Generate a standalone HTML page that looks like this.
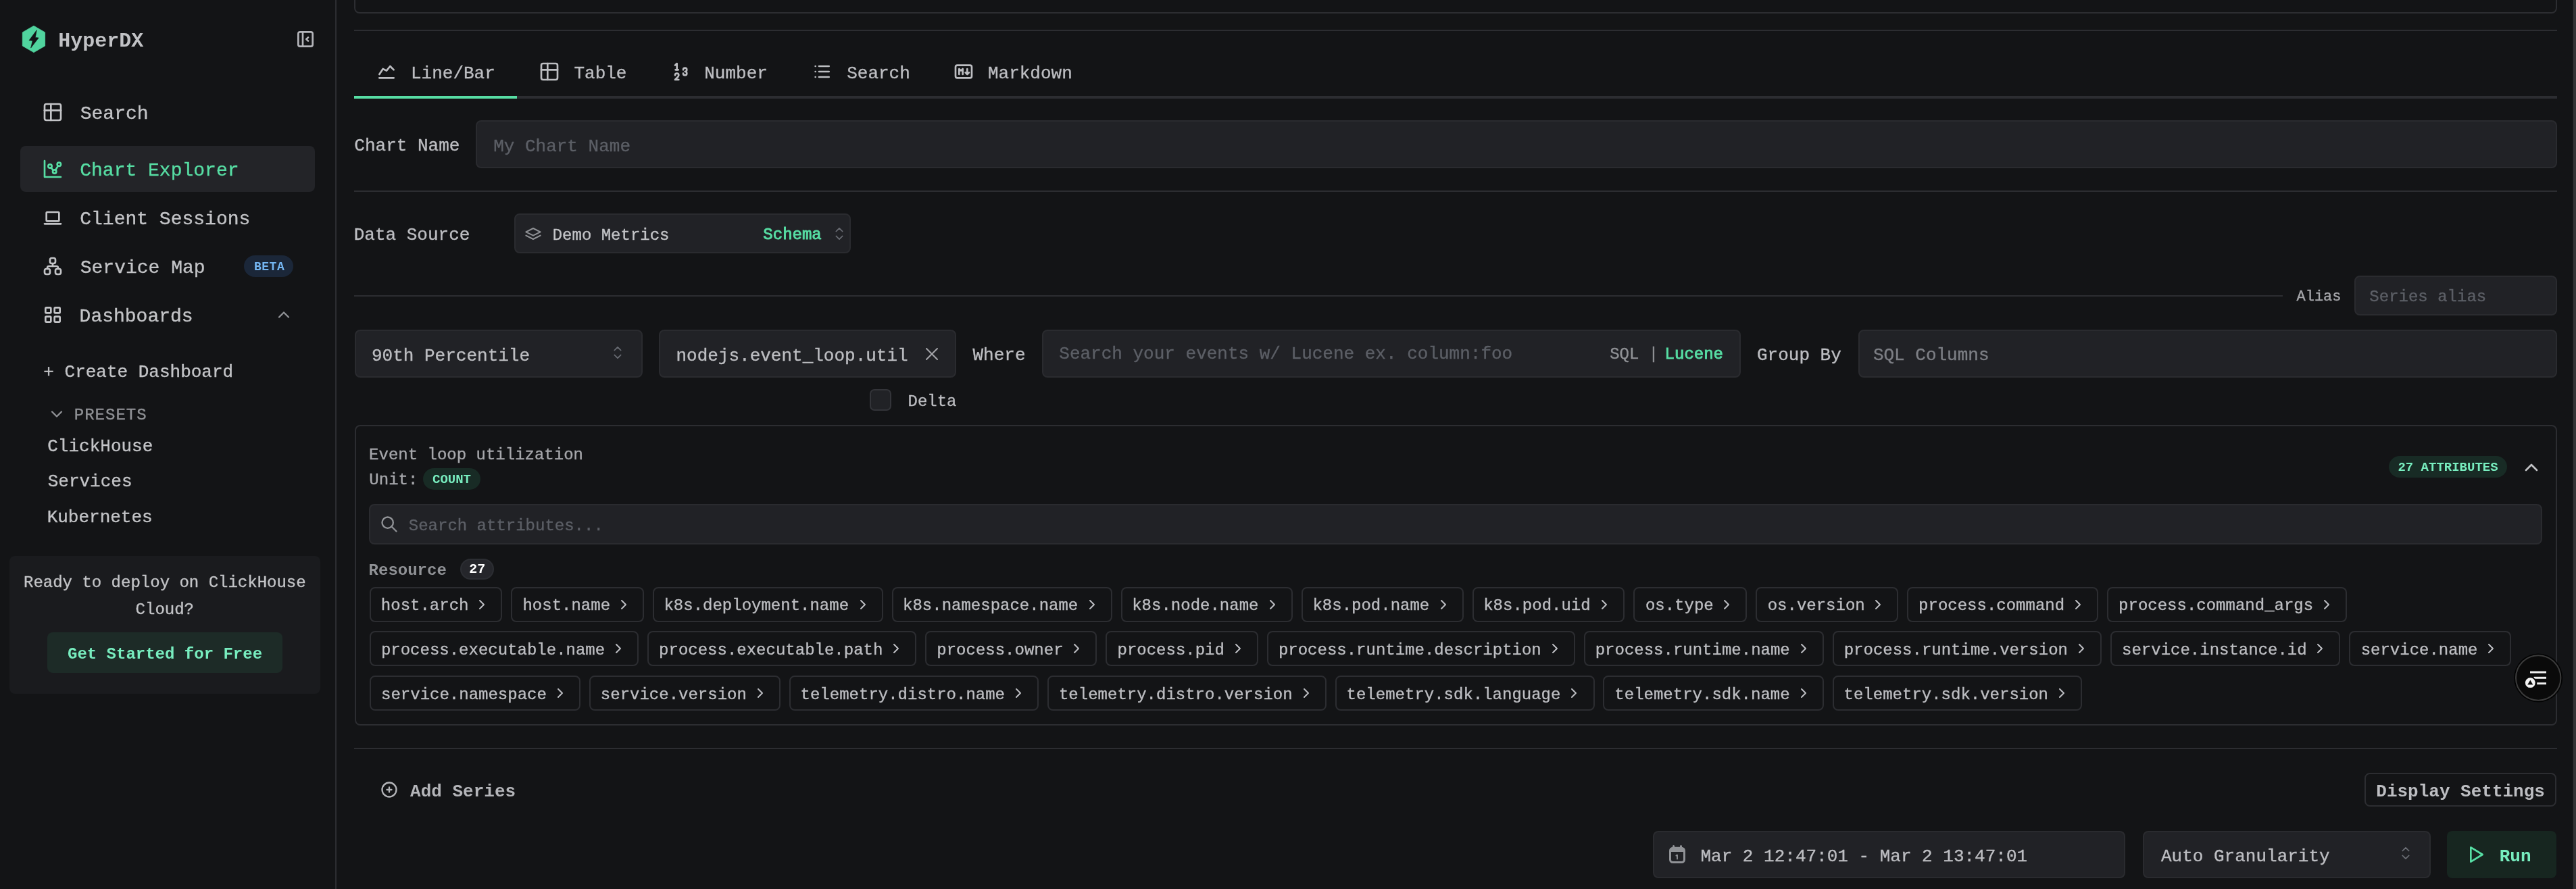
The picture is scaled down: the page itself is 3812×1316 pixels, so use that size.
<!DOCTYPE html>
<html><head><meta charset="utf-8"><title>HyperDX</title>
<style>
html,body{margin:0;padding:0;}
body{width:3812px;height:1316px;overflow:hidden;position:relative;background:#131416;font-family:"Liberation Mono",monospace;}
.t{position:absolute;white-space:pre;line-height:1;-webkit-text-stroke:0.35px currentColor;}
#root{position:absolute;left:0;top:0;width:3812px;height:1316px;will-change:transform;}
.r{position:absolute;box-sizing:border-box;}
svg.r{overflow:visible;}
</style></head><body><div id="root">
<div class="r" style="left:496.00px;top:0.00px;width:2.00px;height:1316.00px;background:#2c2d31"></div>
<svg class="r" style="left:30px;top:36px" width="40" height="44" viewBox="30 36 40 44"><path d="M50 38.2 L66.6 47.9 L66.6 67.9 L50 77.6 L33.3 67.9 L33.3 47.9 Z" fill="#50d49e" stroke="#50d49e" stroke-width="0.8" stroke-linejoin="round"/><path d="M54.3 44.6 L43 59.8 L48.2 60.3 L45.6 71.1 L57.2 56 L52.3 55.5 Z" fill="#131416" stroke="#131416" stroke-width="0.6" stroke-linejoin="round"/></svg>
<div class="t" style="left:86.35px;top:46.22px;font-size:30px;color:#c1c2c5;font-weight:700;-webkit-text-stroke:0;">HyperDX</div>
<svg class="r" style="left:436.00px;top:41.90px;" width="32" height="32" viewBox="0 0 24 24" fill="none" stroke="#b4b5ba" stroke-width="2" stroke-linecap="round" stroke-linejoin="round"><path d="M4 6a2 2 0 0 1 2 -2h12a2 2 0 0 1 2 2v12a2 2 0 0 1 -2 2h-12a2 2 0 0 1 -2 -2z"/><path d="M9 4v16"/><path d="M15 10l-2 2l2 2"/></svg>
<svg class="r" style="left:62.13px;top:150.23px;" width="32" height="32" viewBox="0 0 24 24" fill="none" stroke="#c3c4c7" stroke-width="2" stroke-linecap="round" stroke-linejoin="round"><rect x="3" y="3" width="18" height="18" rx="2"/><path d="M3 10h18"/><path d="M10 3v18"/></svg>
<div class="t" style="left:118.72px;top:155.25px;font-size:28px;color:#c3c4c7;">Search</div>
<div class="r" style="left:30.20px;top:216.10px;width:435.80px;height:67.50px;background:#232428;border-radius:8px"></div>
<svg class="r" style="left:62.13px;top:233.93px;" width="32" height="32" viewBox="0 0 24 24" fill="none" stroke="#57dea4" stroke-width="2" stroke-linecap="round" stroke-linejoin="round"><path d="M3 3v18h18"/><circle cx="9" cy="9" r="2"/><circle cx="19" cy="7" r="2"/><circle cx="14" cy="15" r="2"/><path d="M10.16 10.62l2.34 2.88"/><path d="M15.088 13.328l2.837 -4.586"/></svg>
<div class="t" style="left:118.26px;top:238.95px;font-size:28px;color:#57dea4;">Chart Explorer</div>
<svg class="r" style="left:62.13px;top:305.53px;" width="32" height="32" viewBox="0 0 24 24" fill="none" stroke="#c3c4c7" stroke-width="2" stroke-linecap="round" stroke-linejoin="round"><path d="M3 19l18 0"/><path d="M5 7a1 1 0 0 1 1 -1h12a1 1 0 0 1 1 1v8a1 1 0 0 1 -1 1h-12a1 1 0 0 1 -1 -1z"/></svg>
<div class="t" style="left:118.26px;top:310.55px;font-size:28px;color:#c3c4c7;">Client Sessions</div>
<svg class="r" style="left:62.13px;top:377.83px;" width="32" height="32" viewBox="0 0 24 24" fill="none" stroke="#c3c4c7" stroke-width="2" stroke-linecap="round" stroke-linejoin="round"><path d="M3 17a2 2 0 0 1 2 -2h2a2 2 0 0 1 2 2v2a2 2 0 0 1 -2 2h-2a2 2 0 0 1 -2 -2z"/><path d="M15 17a2 2 0 0 1 2 -2h2a2 2 0 0 1 2 2v2a2 2 0 0 1 -2 2h-2a2 2 0 0 1 -2 -2z"/><path d="M9 5a2 2 0 0 1 2 -2h2a2 2 0 0 1 2 2v2a2 2 0 0 1 -2 2h-2a2 2 0 0 1 -2 -2z"/><path d="M6 15v-1a2 2 0 0 1 2 -2h8a2 2 0 0 1 2 2v1"/><path d="M12 9l0 3"/></svg>
<div class="t" style="left:118.72px;top:383.35px;font-size:28px;color:#c3c4c7;">Service Map</div>
<div class="r" style="left:361.20px;top:378.30px;width:72.70px;height:31.90px;background:#1b2739;border-radius:16px"></div>
<div class="t" style="left:376.00px;top:386.11px;font-size:18px;color:#74b6f2;font-weight:700;-webkit-text-stroke:0;letter-spacing:0.5px">BETA</div>
<svg class="r" style="left:61.60px;top:449.70px;" width="32" height="32" viewBox="0 0 24 24" fill="none" stroke="#c3c4c7" stroke-width="2" stroke-linecap="round" stroke-linejoin="round"><path d="M4 5a1 1 0 0 1 1 -1h4a1 1 0 0 1 1 1v4a1 1 0 0 1 -1 1h-4a1 1 0 0 1 -1 -1z"/><path d="M14 5a1 1 0 0 1 1 -1h4a1 1 0 0 1 1 1v4a1 1 0 0 1 -1 1h-4a1 1 0 0 1 -1 -1z"/><path d="M4 15a1 1 0 0 1 1 -1h4a1 1 0 0 1 1 1v4a1 1 0 0 1 -1 1h-4a1 1 0 0 1 -1 -1z"/><path d="M14 15a1 1 0 0 1 1 -1h4a1 1 0 0 1 1 1v4a1 1 0 0 1 -1 1h-4a1 1 0 0 1 -1 -1z"/></svg>
<div class="t" style="left:117.59px;top:454.85px;font-size:28px;color:#c3c4c7;">Dashboards</div>
<svg class="r" style="left:405.87px;top:451.67px;" width="28" height="28" viewBox="0 0 24 24" fill="none" stroke="#909296" stroke-width="2" stroke-linecap="round" stroke-linejoin="round"><path d="M6 15l6 -6l6 6"/></svg>
<div class="t" style="left:64.33px;top:538.18px;font-size:26px;color:#c3c4c7;">+ Create Dashboard</div>
<svg class="r" style="left:69.77px;top:598.97px;" width="28" height="28" viewBox="0 0 24 24" fill="none" stroke="#909296" stroke-width="2" stroke-linecap="round" stroke-linejoin="round"><path d="M6 9l6 6l6 -6"/></svg>
<div class="t" style="left:109.80px;top:603.41px;font-size:24px;color:#909296;letter-spacing:1px">PRESETS</div>
<div class="t" style="left:70.27px;top:648.38px;font-size:26px;color:#c3c4c7;">ClickHouse</div>
<div class="t" style="left:70.70px;top:700.18px;font-size:26px;color:#c3c4c7;">Services</div>
<div class="t" style="left:69.64px;top:753.38px;font-size:26px;color:#c3c4c7;">Kubernetes</div>
<div class="r" style="left:14.10px;top:823.30px;width:459.80px;height:203.90px;background:#1a1b1e;border-radius:8px"></div>
<div class="t" style="left:35.00px;top:850.51px;font-size:24px;color:#c3c4c7;">Ready to deploy on ClickHouse</div>
<div class="t" style="left:200.60px;top:890.71px;font-size:24px;color:#c3c4c7;">Cloud?</div>
<div class="r" style="left:70.30px;top:936.10px;width:347.60px;height:59.60px;background:#1d2b27;border-radius:8px"></div>
<div class="t" style="left:100.00px;top:956.51px;font-size:24px;color:#78edbf;font-weight:700;-webkit-text-stroke:0;">Get Started for Free</div>
<div class="r" style="left:524.00px;top:-40.00px;width:3260.00px;height:59.80px;background:transparent;border:2px solid #2c2d31;border-radius:8px;"></div>
<div class="r" style="left:524.00px;top:44.00px;width:3260.00px;height:2.00px;background:#2c2d31"></div>
<div class="r" style="left:524.00px;top:142.00px;width:3260.00px;height:4.00px;background:#2c2d31"></div>
<div class="r" style="left:524.00px;top:142.00px;width:241.20px;height:4.00px;background:#57dea4"></div>
<svg class="r" style="left:556.10px;top:90.33px;" width="32" height="32" viewBox="0 0 24 24" fill="none" stroke="#bdbec2" stroke-width="2" stroke-linecap="round" stroke-linejoin="round"><path d="M4 19l16 0"/><path d="M4 15l4 -6l4 2l4 -5l4 4"/></svg>
<div class="t" style="left:607.99px;top:96.08px;font-size:26px;color:#bdbec2;">Line/Bar</div>
<svg class="r" style="left:797.33px;top:90.03px;" width="32" height="32" viewBox="0 0 24 24" fill="none" stroke="#bdbec2" stroke-width="2" stroke-linecap="round" stroke-linejoin="round"><rect x="3" y="3" width="18" height="18" rx="2"/><path d="M3 10h18"/><path d="M10 3v18"/></svg>
<div class="t" style="left:849.44px;top:96.08px;font-size:26px;color:#bdbec2;">Table</div>
<svg class="r" style="left:990.73px;top:90.33px;" width="32" height="32" viewBox="0 0 24 24" fill="none" stroke="#bdbec2" stroke-width="2" stroke-linecap="round" stroke-linejoin="round"><path d="M8 10v-7l-2 2"/><path d="M6 16a2 2 0 1 1 4 0c0 .591 -.601 1.46 -1 2l-3 3h4"/><path d="M15 14a2 2 0 1 0 2 -2a2 2 0 1 0 -2 -2"/><path d="M6.5 10h3"/></svg>
<div class="t" style="left:1042.24px;top:96.08px;font-size:26px;color:#bdbec2;">Number</div>
<svg class="r" style="left:1199.67px;top:90.33px;" width="32" height="32" viewBox="0 0 24 24" fill="none" stroke="#bdbec2" stroke-width="2" stroke-linecap="round" stroke-linejoin="round"><path d="M9 6l11 0"/><path d="M9 12l11 0"/><path d="M9 18l11 0"/><path d="M5 6l0 .01"/><path d="M5 12l0 .01"/><path d="M5 18l0 .01"/></svg>
<div class="t" style="left:1253.20px;top:96.08px;font-size:26px;color:#bdbec2;">Search</div>
<svg class="r" style="left:1410.13px;top:89.57px;" width="32" height="32" viewBox="0 0 24 24" fill="none" stroke="#bdbec2" stroke-width="2" stroke-linecap="round" stroke-linejoin="round"><path d="M3 7a2 2 0 0 1 2 -2h14a2 2 0 0 1 2 2v10a2 2 0 0 1 -2 2h-14a2 2 0 0 1 -2 -2z"/><path d="M7 15v-6l2 2l2 -2v6"/><path d="M14 13l2 2l2 -2m-2 2v-6"/></svg>
<div class="t" style="left:1461.96px;top:96.08px;font-size:26px;color:#bdbec2;">Markdown</div>
<div class="t" style="left:524.37px;top:203.48px;font-size:26px;color:#bdbec2;">Chart Name</div>
<div class="r" style="left:704.40px;top:178.40px;width:3079.60px;height:70.70px;background:#212226;border:2px solid #2a2b2f;border-radius:8px;"></div>
<div class="t" style="left:730.16px;top:204.08px;font-size:26px;color:#5c5f66;">My Chart Name</div>
<div class="r" style="left:524.00px;top:282.00px;width:3260.00px;height:2.00px;background:#2c2d31"></div>
<div class="t" style="left:523.74px;top:335.08px;font-size:26px;color:#bdbec2;">Data Source</div>
<div class="r" style="left:760.50px;top:316.40px;width:498.10px;height:59.00px;background:#212226;border:2px solid #2a2b2f;border-radius:8px;"></div>
<svg class="r" style="left:773.47px;top:329.70px;" width="32" height="32" viewBox="0 0 24 24" fill="none" stroke="#909296" stroke-width="1.5" stroke-linecap="round" stroke-linejoin="round"><path d="M12 6l-8 4l8 4l8 -4l-8 -4"/><path d="M4 14l8 4l8 -4"/></svg>
<div class="t" style="left:817.70px;top:336.71px;font-size:24px;color:#c3c4c7;">Demo Metrics</div>
<div class="t" style="left:1129.37px;top:335.71px;font-size:24px;color:#57dea4;-webkit-text-stroke:0.9px currentColor">Schema</div>
<svg class="r" style="left:1227.84px;top:332.04px;" width="28" height="28" viewBox="0 0 24 24" fill="none" stroke="#6b6e75" stroke-width="1.5" stroke-linecap="round" stroke-linejoin="round"><path d="M8 9l4 -4l4 4"/><path d="M16 15l-4 4l-4 -4"/></svg>
<div class="r" style="left:524.00px;top:437.00px;width:2854.00px;height:2.00px;background:#2c2d31"></div>
<div class="t" style="left:3398.50px;top:429.35px;font-size:22px;color:#a6a7ab;">Alias</div>
<div class="r" style="left:3484.30px;top:408.40px;width:299.40px;height:59.10px;background:#212226;border:2px solid #2a2b2f;border-radius:8px;"></div>
<div class="t" style="left:3506.37px;top:428.31px;font-size:24px;color:#5c5f66;">Series alias</div>
<div class="r" style="left:524.50px;top:488.20px;width:426.20px;height:71.20px;background:#212226;border:2px solid #2a2b2f;border-radius:8px;"></div>
<div class="t" style="left:550.01px;top:514.08px;font-size:26px;color:#bdbec2;">90th Percentile</div>
<svg class="r" style="left:899.54px;top:508.04px;" width="28" height="28" viewBox="0 0 24 24" fill="none" stroke="#6b6e75" stroke-width="1.5" stroke-linecap="round" stroke-linejoin="round"><path d="M8 9l4 -4l4 4"/><path d="M16 15l-4 4l-4 -4"/></svg>
<div class="r" style="left:975.20px;top:488.20px;width:439.60px;height:71.20px;background:#212226;border:2px solid #2a2b2f;border-radius:8px;"></div>
<div class="t" style="left:1000.43px;top:513.88px;font-size:26px;color:#bdbec2;">nodejs.event_loop.util</div>
<svg class="r" style="left:1363.00px;top:508.40px;" width="32" height="32" viewBox="0 0 24 24" fill="none" stroke="#a6a7ab" stroke-width="1.5" stroke-linecap="round" stroke-linejoin="round"><path d="M18 6l-12 12"/><path d="M6 6l12 12"/></svg>
<div class="t" style="left:1439.50px;top:513.08px;font-size:26px;color:#bdbec2;">Where</div>
<div class="r" style="left:1541.50px;top:488.20px;width:1034.50px;height:71.20px;background:#212226;border:2px solid #2a2b2f;border-radius:8px;"></div>
<div class="t" style="left:1567.30px;top:511.08px;font-size:26px;color:#5c5f66;">Search your events w/ Lucene ex. column:foo</div>
<div class="t" style="left:2382.17px;top:513.41px;font-size:24px;color:#909296;">SQL |</div>
<div class="t" style="left:2463.62px;top:513.41px;font-size:24px;color:#57dea4;-webkit-text-stroke:0.9px currentColor">Lucene</div>
<div class="t" style="left:2599.97px;top:513.08px;font-size:26px;color:#bdbec2;">Group By</div>
<div class="r" style="left:2749.50px;top:488.20px;width:1034.20px;height:71.20px;background:#212226;border:2px solid #2a2b2f;border-radius:8px;"></div>
<div class="t" style="left:2771.90px;top:512.68px;font-size:26px;color:#7d7f85;">SQL Columns</div>
<div class="r" style="left:1287.20px;top:576.30px;width:31.60px;height:31.40px;background:#212226;border:2px solid #333439;border-radius:7px;"></div>
<div class="t" style="left:1343.50px;top:582.81px;font-size:24px;color:#bdbec2;">Delta</div>
<div class="r" style="left:524.75px;top:628.50px;width:3259.25px;height:445.50px;background:transparent;border:2px solid #2c2d31;border-radius:8px;"></div>
<div class="t" style="left:546.10px;top:662.11px;font-size:24px;color:#a6a7ab;">Event loop utilization</div>
<div class="t" style="left:546.34px;top:699.31px;font-size:24px;color:#a6a7ab;">Unit:</div>
<div class="r" style="left:626.20px;top:693.40px;width:84.70px;height:31.20px;background:#182b25;border-radius:16px"></div>
<div class="t" style="left:640.00px;top:700.64px;font-size:19px;color:#78edbf;font-weight:700;-webkit-text-stroke:0;">COUNT</div>
<div class="r" style="left:3535.00px;top:675.10px;width:175.00px;height:31.80px;background:#182b25;border-radius:16px"></div>
<div class="t" style="left:3548.40px;top:682.64px;font-size:19px;color:#78edbf;font-weight:700;-webkit-text-stroke:0;">27 ATTRIBUTES</div>
<svg class="r" style="left:3729.73px;top:675.73px;" width="32" height="32" viewBox="0 0 24 24" fill="none" stroke="#c1c2c5" stroke-width="2" stroke-linecap="round" stroke-linejoin="round"><path d="M6 15l6 -6l6 6"/></svg>
<div class="r" style="left:546.30px;top:746.10px;width:3215.30px;height:59.50px;background:#212226;border:2px solid #2a2b2f;border-radius:8px;"></div>
<svg class="r" style="left:561.57px;top:762.37px;" width="28" height="28" viewBox="0 0 24 24" fill="none" stroke="#909296" stroke-width="2" stroke-linecap="round" stroke-linejoin="round"><path d="M3 10a7 7 0 1 0 14 0a7 7 0 1 0 -14 0"/><path d="M21 21l-6 -6"/></svg>
<div class="t" style="left:604.77px;top:766.81px;font-size:24px;color:#5c5f66;">Search attributes...</div>
<div class="t" style="left:545.59px;top:833.21px;font-size:24px;color:#909296;font-weight:700;-webkit-text-stroke:0;">Resource</div>
<div class="r" style="left:681.10px;top:827.40px;width:50.40px;height:31.00px;background:#25262b;border:2px solid #2c2e33;border-radius:16px"></div>
<div class="t" style="left:694.30px;top:833.48px;font-size:20px;color:#ffffff;font-weight:700;-webkit-text-stroke:0;">27</div>
<div class="r" style="left:546.70px;top:868.50px;width:196.80px;height:52.00px;border:2px solid #2c2d31;border-radius:8px"></div>
<div class="t" style="left:563.83px;top:885.31px;font-size:24px;color:#bdbec2;">host.arch</div>
<svg class="r" style="left:701.30px;top:882.50px;" width="24" height="24" viewBox="0 0 24 24" fill="none" stroke="#bdbec2" stroke-width="2" stroke-linecap="round" stroke-linejoin="round"><path d="M9 6l6 6l-6 6"/></svg>
<div class="r" style="left:756.30px;top:868.50px;width:196.80px;height:52.00px;border:2px solid #2c2d31;border-radius:8px"></div>
<div class="t" style="left:773.43px;top:885.31px;font-size:24px;color:#bdbec2;">host.name</div>
<svg class="r" style="left:910.90px;top:882.50px;" width="24" height="24" viewBox="0 0 24 24" fill="none" stroke="#bdbec2" stroke-width="2" stroke-linecap="round" stroke-linejoin="round"><path d="M9 6l6 6l-6 6"/></svg>
<div class="r" style="left:965.90px;top:868.50px;width:340.80px;height:52.00px;border:2px solid #2c2d31;border-radius:8px"></div>
<div class="t" style="left:982.43px;top:885.31px;font-size:24px;color:#bdbec2;">k8s.deployment.name</div>
<svg class="r" style="left:1264.50px;top:882.50px;" width="24" height="24" viewBox="0 0 24 24" fill="none" stroke="#bdbec2" stroke-width="2" stroke-linecap="round" stroke-linejoin="round"><path d="M9 6l6 6l-6 6"/></svg>
<div class="r" style="left:1319.50px;top:868.50px;width:326.40px;height:52.00px;border:2px solid #2c2d31;border-radius:8px"></div>
<div class="t" style="left:1336.03px;top:885.31px;font-size:24px;color:#bdbec2;">k8s.namespace.name</div>
<svg class="r" style="left:1603.70px;top:882.50px;" width="24" height="24" viewBox="0 0 24 24" fill="none" stroke="#bdbec2" stroke-width="2" stroke-linecap="round" stroke-linejoin="round"><path d="M9 6l6 6l-6 6"/></svg>
<div class="r" style="left:1658.70px;top:868.50px;width:254.40px;height:52.00px;border:2px solid #2c2d31;border-radius:8px"></div>
<div class="t" style="left:1675.23px;top:885.31px;font-size:24px;color:#bdbec2;">k8s.node.name</div>
<svg class="r" style="left:1870.90px;top:882.50px;" width="24" height="24" viewBox="0 0 24 24" fill="none" stroke="#bdbec2" stroke-width="2" stroke-linecap="round" stroke-linejoin="round"><path d="M9 6l6 6l-6 6"/></svg>
<div class="r" style="left:1925.90px;top:868.50px;width:240.00px;height:52.00px;border:2px solid #2c2d31;border-radius:8px"></div>
<div class="t" style="left:1942.43px;top:885.31px;font-size:24px;color:#bdbec2;">k8s.pod.name</div>
<svg class="r" style="left:2123.70px;top:882.50px;" width="24" height="24" viewBox="0 0 24 24" fill="none" stroke="#bdbec2" stroke-width="2" stroke-linecap="round" stroke-linejoin="round"><path d="M9 6l6 6l-6 6"/></svg>
<div class="r" style="left:2178.70px;top:868.50px;width:225.60px;height:52.00px;border:2px solid #2c2d31;border-radius:8px"></div>
<div class="t" style="left:2195.23px;top:885.31px;font-size:24px;color:#bdbec2;">k8s.pod.uid</div>
<svg class="r" style="left:2362.10px;top:882.50px;" width="24" height="24" viewBox="0 0 24 24" fill="none" stroke="#bdbec2" stroke-width="2" stroke-linecap="round" stroke-linejoin="round"><path d="M9 6l6 6l-6 6"/></svg>
<div class="r" style="left:2417.10px;top:868.50px;width:168.00px;height:52.00px;border:2px solid #2c2d31;border-radius:8px"></div>
<div class="t" style="left:2434.88px;top:885.31px;font-size:24px;color:#bdbec2;">os.type</div>
<svg class="r" style="left:2542.90px;top:882.50px;" width="24" height="24" viewBox="0 0 24 24" fill="none" stroke="#bdbec2" stroke-width="2" stroke-linecap="round" stroke-linejoin="round"><path d="M9 6l6 6l-6 6"/></svg>
<div class="r" style="left:2597.90px;top:868.50px;width:211.20px;height:52.00px;border:2px solid #2c2d31;border-radius:8px"></div>
<div class="t" style="left:2615.68px;top:885.31px;font-size:24px;color:#bdbec2;">os.version</div>
<svg class="r" style="left:2766.90px;top:882.50px;" width="24" height="24" viewBox="0 0 24 24" fill="none" stroke="#bdbec2" stroke-width="2" stroke-linecap="round" stroke-linejoin="round"><path d="M9 6l6 6l-6 6"/></svg>
<div class="r" style="left:2821.90px;top:868.50px;width:283.20px;height:52.00px;border:2px solid #2c2d31;border-radius:8px"></div>
<div class="t" style="left:2839.10px;top:885.31px;font-size:24px;color:#bdbec2;">process.command</div>
<svg class="r" style="left:3062.90px;top:882.50px;" width="24" height="24" viewBox="0 0 24 24" fill="none" stroke="#bdbec2" stroke-width="2" stroke-linecap="round" stroke-linejoin="round"><path d="M9 6l6 6l-6 6"/></svg>
<div class="r" style="left:3117.90px;top:868.50px;width:355.20px;height:52.00px;border:2px solid #2c2d31;border-radius:8px"></div>
<div class="t" style="left:3135.10px;top:885.31px;font-size:24px;color:#bdbec2;">process.command_args</div>
<svg class="r" style="left:3430.90px;top:882.50px;" width="24" height="24" viewBox="0 0 24 24" fill="none" stroke="#bdbec2" stroke-width="2" stroke-linecap="round" stroke-linejoin="round"><path d="M9 6l6 6l-6 6"/></svg>
<div class="r" style="left:546.70px;top:933.70px;width:398.40px;height:52.00px;border:2px solid #2c2d31;border-radius:8px"></div>
<div class="t" style="left:563.90px;top:950.51px;font-size:24px;color:#bdbec2;">process.executable.name</div>
<svg class="r" style="left:902.90px;top:947.70px;" width="24" height="24" viewBox="0 0 24 24" fill="none" stroke="#bdbec2" stroke-width="2" stroke-linecap="round" stroke-linejoin="round"><path d="M9 6l6 6l-6 6"/></svg>
<div class="r" style="left:957.90px;top:933.70px;width:398.40px;height:52.00px;border:2px solid #2c2d31;border-radius:8px"></div>
<div class="t" style="left:975.10px;top:950.51px;font-size:24px;color:#bdbec2;">process.executable.path</div>
<svg class="r" style="left:1314.10px;top:947.70px;" width="24" height="24" viewBox="0 0 24 24" fill="none" stroke="#bdbec2" stroke-width="2" stroke-linecap="round" stroke-linejoin="round"><path d="M9 6l6 6l-6 6"/></svg>
<div class="r" style="left:1369.10px;top:933.70px;width:254.40px;height:52.00px;border:2px solid #2c2d31;border-radius:8px"></div>
<div class="t" style="left:1386.30px;top:950.51px;font-size:24px;color:#bdbec2;">process.owner</div>
<svg class="r" style="left:1581.30px;top:947.70px;" width="24" height="24" viewBox="0 0 24 24" fill="none" stroke="#bdbec2" stroke-width="2" stroke-linecap="round" stroke-linejoin="round"><path d="M9 6l6 6l-6 6"/></svg>
<div class="r" style="left:1636.30px;top:933.70px;width:225.60px;height:52.00px;border:2px solid #2c2d31;border-radius:8px"></div>
<div class="t" style="left:1653.50px;top:950.51px;font-size:24px;color:#bdbec2;">process.pid</div>
<svg class="r" style="left:1819.70px;top:947.70px;" width="24" height="24" viewBox="0 0 24 24" fill="none" stroke="#bdbec2" stroke-width="2" stroke-linecap="round" stroke-linejoin="round"><path d="M9 6l6 6l-6 6"/></svg>
<div class="r" style="left:1874.70px;top:933.70px;width:456.00px;height:52.00px;border:2px solid #2c2d31;border-radius:8px"></div>
<div class="t" style="left:1891.90px;top:950.51px;font-size:24px;color:#bdbec2;">process.runtime.description</div>
<svg class="r" style="left:2288.50px;top:947.70px;" width="24" height="24" viewBox="0 0 24 24" fill="none" stroke="#bdbec2" stroke-width="2" stroke-linecap="round" stroke-linejoin="round"><path d="M9 6l6 6l-6 6"/></svg>
<div class="r" style="left:2343.50px;top:933.70px;width:355.20px;height:52.00px;border:2px solid #2c2d31;border-radius:8px"></div>
<div class="t" style="left:2360.70px;top:950.51px;font-size:24px;color:#bdbec2;">process.runtime.name</div>
<svg class="r" style="left:2656.50px;top:947.70px;" width="24" height="24" viewBox="0 0 24 24" fill="none" stroke="#bdbec2" stroke-width="2" stroke-linecap="round" stroke-linejoin="round"><path d="M9 6l6 6l-6 6"/></svg>
<div class="r" style="left:2711.50px;top:933.70px;width:398.40px;height:52.00px;border:2px solid #2c2d31;border-radius:8px"></div>
<div class="t" style="left:2728.70px;top:950.51px;font-size:24px;color:#bdbec2;">process.runtime.version</div>
<svg class="r" style="left:3067.70px;top:947.70px;" width="24" height="24" viewBox="0 0 24 24" fill="none" stroke="#bdbec2" stroke-width="2" stroke-linecap="round" stroke-linejoin="round"><path d="M9 6l6 6l-6 6"/></svg>
<div class="r" style="left:3122.70px;top:933.70px;width:340.80px;height:52.00px;border:2px solid #2c2d31;border-radius:8px"></div>
<div class="t" style="left:3140.04px;top:950.51px;font-size:24px;color:#bdbec2;">service.instance.id</div>
<svg class="r" style="left:3421.30px;top:947.70px;" width="24" height="24" viewBox="0 0 24 24" fill="none" stroke="#bdbec2" stroke-width="2" stroke-linecap="round" stroke-linejoin="round"><path d="M9 6l6 6l-6 6"/></svg>
<div class="r" style="left:3476.30px;top:933.70px;width:240.00px;height:52.00px;border:2px solid #2c2d31;border-radius:8px"></div>
<div class="t" style="left:3493.64px;top:950.51px;font-size:24px;color:#bdbec2;">service.name</div>
<svg class="r" style="left:3674.10px;top:947.70px;" width="24" height="24" viewBox="0 0 24 24" fill="none" stroke="#bdbec2" stroke-width="2" stroke-linecap="round" stroke-linejoin="round"><path d="M9 6l6 6l-6 6"/></svg>
<div class="r" style="left:546.70px;top:999.80px;width:312.00px;height:52.00px;border:2px solid #2c2d31;border-radius:8px"></div>
<div class="t" style="left:564.04px;top:1016.61px;font-size:24px;color:#bdbec2;">service.namespace</div>
<svg class="r" style="left:816.50px;top:1013.80px;" width="24" height="24" viewBox="0 0 24 24" fill="none" stroke="#bdbec2" stroke-width="2" stroke-linecap="round" stroke-linejoin="round"><path d="M9 6l6 6l-6 6"/></svg>
<div class="r" style="left:871.50px;top:999.80px;width:283.20px;height:52.00px;border:2px solid #2c2d31;border-radius:8px"></div>
<div class="t" style="left:888.84px;top:1016.61px;font-size:24px;color:#bdbec2;">service.version</div>
<svg class="r" style="left:1112.50px;top:1013.80px;" width="24" height="24" viewBox="0 0 24 24" fill="none" stroke="#bdbec2" stroke-width="2" stroke-linecap="round" stroke-linejoin="round"><path d="M9 6l6 6l-6 6"/></svg>
<div class="r" style="left:1167.50px;top:999.80px;width:369.60px;height:52.00px;border:2px solid #2c2d31;border-radius:8px"></div>
<div class="t" style="left:1184.57px;top:1016.61px;font-size:24px;color:#bdbec2;">telemetry.distro.name</div>
<svg class="r" style="left:1494.90px;top:1013.80px;" width="24" height="24" viewBox="0 0 24 24" fill="none" stroke="#bdbec2" stroke-width="2" stroke-linecap="round" stroke-linejoin="round"><path d="M9 6l6 6l-6 6"/></svg>
<div class="r" style="left:1549.90px;top:999.80px;width:412.80px;height:52.00px;border:2px solid #2c2d31;border-radius:8px"></div>
<div class="t" style="left:1566.97px;top:1016.61px;font-size:24px;color:#bdbec2;">telemetry.distro.version</div>
<svg class="r" style="left:1920.50px;top:1013.80px;" width="24" height="24" viewBox="0 0 24 24" fill="none" stroke="#bdbec2" stroke-width="2" stroke-linecap="round" stroke-linejoin="round"><path d="M9 6l6 6l-6 6"/></svg>
<div class="r" style="left:1975.50px;top:999.80px;width:384.00px;height:52.00px;border:2px solid #2c2d31;border-radius:8px"></div>
<div class="t" style="left:1992.57px;top:1016.61px;font-size:24px;color:#bdbec2;">telemetry.sdk.language</div>
<svg class="r" style="left:2317.30px;top:1013.80px;" width="24" height="24" viewBox="0 0 24 24" fill="none" stroke="#bdbec2" stroke-width="2" stroke-linecap="round" stroke-linejoin="round"><path d="M9 6l6 6l-6 6"/></svg>
<div class="r" style="left:2372.30px;top:999.80px;width:326.40px;height:52.00px;border:2px solid #2c2d31;border-radius:8px"></div>
<div class="t" style="left:2389.37px;top:1016.61px;font-size:24px;color:#bdbec2;">telemetry.sdk.name</div>
<svg class="r" style="left:2656.50px;top:1013.80px;" width="24" height="24" viewBox="0 0 24 24" fill="none" stroke="#bdbec2" stroke-width="2" stroke-linecap="round" stroke-linejoin="round"><path d="M9 6l6 6l-6 6"/></svg>
<div class="r" style="left:2711.50px;top:999.80px;width:369.60px;height:52.00px;border:2px solid #2c2d31;border-radius:8px"></div>
<div class="t" style="left:2728.57px;top:1016.61px;font-size:24px;color:#bdbec2;">telemetry.sdk.version</div>
<svg class="r" style="left:3038.90px;top:1013.80px;" width="24" height="24" viewBox="0 0 24 24" fill="none" stroke="#bdbec2" stroke-width="2" stroke-linecap="round" stroke-linejoin="round"><path d="M9 6l6 6l-6 6"/></svg>
<svg class="r" style="left:3716px;top:963px" width="81" height="81" viewBox="3716 963 81 81"><circle cx="3756.2" cy="1003.5" r="36" fill="#000" fill-opacity="0.85"/><circle cx="3756.2" cy="1003.5" r="33.2" fill="#0a0a0a" stroke="#3b3b3b" stroke-width="2"/><rect x="3744" y="993.6" width="24" height="3" fill="#f0f0f0"/><rect x="3749.6" y="1001.8" width="18.4" height="3" fill="#f0f0f0"/><rect x="3754.2" y="1010.3" width="13.8" height="3" fill="#f0f0f0"/><circle cx="3744.3" cy="1010.7" r="9" fill="#0a0a0a"/><circle cx="3744.3" cy="1010.7" r="7.4" fill="#f4f4f4"/><path d="M3744.3 1006.8 L3748.3 1013.4 L3740.3 1013.4 Z" fill="#0a0a0a"/></svg>
<div class="r" style="left:524.00px;top:1107.00px;width:3260.00px;height:2.00px;background:#2c2d31"></div>
<svg class="r" style="left:561.87px;top:1155.07px;" width="28" height="28" viewBox="0 0 24 24" fill="none" stroke="#b4b5b9" stroke-width="2" stroke-linecap="round" stroke-linejoin="round"><path d="M3 12a9 9 0 1 0 18 0a9 9 0 0 0 -18 0"/><path d="M9 12h6"/><path d="M12 9v6"/></svg>
<div class="t" style="left:607.10px;top:1159.08px;font-size:26px;color:#b4b5b9;font-weight:700;-webkit-text-stroke:0;">Add Series</div>
<div class="r" style="left:3498.80px;top:1143.60px;width:284.70px;height:50.90px;background:transparent;border:2px solid #2c2d31;border-radius:8px;"></div>
<div class="t" style="left:3516.29px;top:1158.88px;font-size:26px;color:#bdbec2;font-weight:700;-webkit-text-stroke:0;">Display Settings</div>
<div class="r" style="left:2446.40px;top:1229.60px;width:699.00px;height:70.70px;background:#212226;border:2px solid #2a2b2f;border-radius:8px;"></div>
<svg class="r" style="left:2460px;top:1245px" width="45" height="40" viewBox="2460 1245 45 40"><rect x="2471.5" y="1255.3" width="21" height="21.3" rx="4" fill="none" stroke="#909296" stroke-width="3"/><rect x="2471.5" y="1255.3" width="21" height="5.7" fill="#909296"/><path d="M2476.6 1252.5v3M2487.5 1252.5v3" stroke="#909296" stroke-width="3" stroke-linecap="round"/><path d="M2480.4 1266.6l1.6 -0.9v5.9" stroke="#909296" stroke-width="1.9" fill="none" stroke-linecap="round" stroke-linejoin="round"/></svg>
<div class="t" style="left:2516.46px;top:1255.28px;font-size:26px;color:#bdbec2;">Mar 2 12:47:01 - Mar 2 13:47:01</div>
<div class="r" style="left:3170.60px;top:1229.70px;width:426.10px;height:70.70px;background:#212226;border:2px solid #2a2b2f;border-radius:8px;"></div>
<div class="t" style="left:3198.00px;top:1255.08px;font-size:26px;color:#bdbec2;">Auto Granularity</div>
<svg class="r" style="left:3545.84px;top:1249.44px;" width="28" height="28" viewBox="0 0 24 24" fill="none" stroke="#6b6e75" stroke-width="1.5" stroke-linecap="round" stroke-linejoin="round"><path d="M8 9l4 -4l4 4"/><path d="M16 15l-4 4l-4 -4"/></svg>
<div class="r" style="left:3621.10px;top:1229.70px;width:162.40px;height:70.70px;background:#172620;border-radius:8px"></div>
<svg class="r" style="left:3647.00px;top:1249.10px;" width="32" height="32" viewBox="0 0 24 24" fill="none" stroke="#57dea4" stroke-width="2" stroke-linecap="round" stroke-linejoin="round"><path d="M7 4v16l13 -8z"/></svg>
<div class="t" style="left:3698.76px;top:1255.08px;font-size:26px;color:#78edbf;font-weight:700;-webkit-text-stroke:0;">Run</div>
<div class="r" style="left:3807.00px;top:0.00px;width:1.00px;height:1316.00px;background:#1c1c1e"></div>
<div class="r" style="left:3808.00px;top:0.00px;width:4.00px;height:1316.00px;background:#343436"></div>
</div></body></html>
